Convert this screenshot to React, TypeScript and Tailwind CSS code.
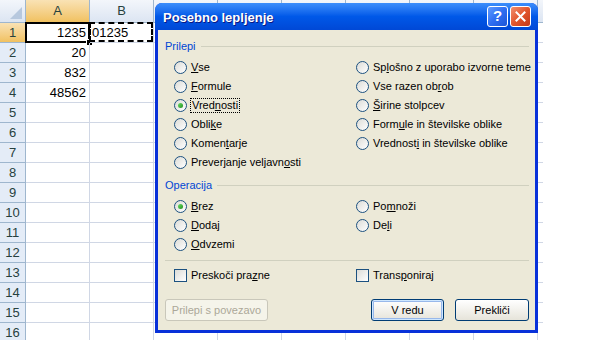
import React from 'react';

const COLS = ['A', 'B', 'C', 'D', 'E', 'F', 'G', 'H'];
const ROWS = Array.from({ length: 16 }, (_, i) => i + 1);

const VALUES: Record<string, string> = {
  A1: '1235',
  A2: '20',
  A3: '832',
  A4: '48562',
};

type Opt = { text: string; u: number; checked?: boolean; focus?: boolean };

const PASTE_LEFT: Opt[] = [
  { text: 'Vse', u: 0 },
  { text: 'Formule', u: 0 },
  { text: 'Vrednosti', u: 4, checked: true, focus: true },
  { text: 'Oblike', u: 4 },
  { text: 'Komentarje', u: 5 },
  { text: 'Preverjanje veljavnosti', u: 19 },
];

const PASTE_RIGHT: Opt[] = [
  { text: 'Splošno z uporabo izvorne teme', u: 2 },
  { text: 'Vse razen obrob', u: 12 },
  { text: 'Širine stolpcev', u: 0 },
  { text: 'Formule in številske oblike', u: 4 },
  { text: 'Vrednosti in številske oblike', u: 8 },
];

const OP_LEFT: Opt[] = [
  { text: 'Brez', u: 0, checked: true },
  { text: 'Dodaj', u: 0 },
  { text: 'Odvzemi', u: 0 },
];

const OP_RIGHT: Opt[] = [
  { text: 'Pomnoži', u: 2 },
  { text: 'Deli', u: 2 },
];

const Label = ({ text, u }: { text: string; u: number }) => (
  <>
    {text.slice(0, u)}
    <span className="underline underline-offset-[1px]">{text[u]}</span>
    {text.slice(u + 1)}
  </>
);

const Radio = ({ opt }: { opt: Opt }) => (
  <div className="flex h-[19px] items-center whitespace-nowrap">
    <span className="flex h-[13px] w-[13px] shrink-0 items-center justify-center rounded-full border border-[#1C5180] bg-linear-to-br from-[#DCDCD7] to-white">
      {opt.checked && <span className="h-[5px] w-[5px] rounded-full bg-linear-to-br from-[#6BE068] to-[#1E8E1B]" />}
    </span>
    <span
      className={
        opt.focus
          ? 'ml-[3px] border border-dotted border-black px-px leading-[13px]'
          : 'ml-[4px] leading-[13px]'
      }
    >
      <Label text={opt.text} u={opt.u} />
    </span>
  </div>
);

const Check = ({ text, u }: { text: string; u: number }) => (
  <div className="flex h-[19px] items-center whitespace-nowrap">
    <span className="h-[13px] w-[13px] shrink-0 border border-[#1C5180] bg-linear-to-br from-[#DCDCD7] to-white" />
    <span className="ml-[4px] leading-[13px]">
      <Label text={text} u={u} />
    </span>
  </div>
);

const GroupTitle = ({ title }: { title: string }) => (
  <div className="flex h-[13px] items-center">
    <span className="leading-[13px] text-[#0046D5]">{title}</span>
    <span className="ml-[5px] h-px flex-1 bg-[#D0D0BF]" />
  </div>
);

const Sheet = () => (
  <div className="grid w-[543px] grid-cols-[26px_repeat(8,64px)_5px] grid-rows-[23px_repeat(16,20px)] font-['Liberation_Sans',Arial,sans-serif] text-[13px]">
    <div className="relative border-r border-b border-[#9EB6CE] bg-linear-to-b from-[#F3F6FB] to-[#DCE5F2]">
      <svg className="absolute right-[3px] bottom-[3px]" width="12" height="12" viewBox="0 0 12 12">
        <path d="M12 0 L12 12 L0 12 Z" fill="#B7C8DE" />
      </svg>
    </div>
    {COLS.map((c) => (
      <div
        key={c}
        className={
          c === 'A'
            ? 'flex items-center justify-center border-r border-b border-[#9EB6CE] bg-linear-to-b from-[#F9E2B4] to-[#F1C15F] text-[#27413E]'
            : 'flex items-center justify-center border-r border-b border-[#9EB6CE] bg-linear-to-b from-[#F3F6FB] to-[#DCE5F2] text-[#27413E]'
        }
      >
        {c === 'A' || c === 'B' ? c : ''}
      </div>
    ))}
    <div className="border-b border-[#9EB6CE] bg-linear-to-b from-[#F3F6FB] to-[#DCE5F2]" />
    {ROWS.map((r) => (
      <React.Fragment key={r}>
        <div
          className={
            r === 1
              ? 'flex items-center justify-center border-r border-b border-[#9EB6CE] bg-linear-to-b from-[#F9E2B4] to-[#F1C15F] text-[#27413E]'
              : 'flex items-center justify-center border-r border-b border-[#9EB6CE] bg-[#E4ECF7] text-[#27413E]'
          }
        >
          {r}
        </div>
        {COLS.map((c) => {
          const key = `${c}${r}`;
          return (
            <div key={key} className="relative flex items-center justify-end border-r border-b border-[#D0D7E5] pr-[3px] text-black">
              {VALUES[key]}
              {key === 'A1' && (
                <>
                  <span className="absolute -top-px -left-px -right-px -bottom-px border-2 border-black" />
                  <span className="absolute -right-[4px] -bottom-[4px] h-[7px] w-[7px] border border-white bg-black" />
                </>
              )}
              {key === 'B1' && (
                <>
                  <span className="absolute left-[2px] text-black">01235</span>
                  <span className="absolute -top-px -left-px right-0 bottom-0 border-2 border-dashed border-black" />
                </>
              )}
            </div>
          );
        })}
        <div className="border-b border-[#D0D7E5]" />
      </React.Fragment>
    ))}
  </div>
);

const Dialog = () => (
  <div className="absolute top-[3px] left-[155px] flex h-[330px] w-[383px] flex-col overflow-hidden rounded-t-[7px] bg-[#0831D9] font-['Liberation_Sans',Tahoma,sans-serif] text-[11px] text-black">
    <div className="flex h-[27px] shrink-0 items-center bg-linear-to-b from-[#3C8EFB] via-[#0058E8] to-[#0048D6] pr-[7px] pl-[8px]">
      <span className="mt-[2px] text-[13px] font-bold text-white [text-shadow:1px_1px_#0A1883]">Posebno lepljenje</span>
      <div className="ml-auto flex gap-[2px]">
        <div className="flex h-[21px] w-[21px] items-center justify-center rounded-[3px] border border-white bg-linear-to-br from-[#5E9BFF] via-[#2F6EF2] to-[#1C55D6] text-[15px] font-bold text-white">
          ?
        </div>
        <div className="flex h-[21px] w-[21px] items-center justify-center rounded-[3px] border border-white bg-linear-to-br from-[#F08E6E] via-[#E2552B] to-[#C4391A]">
          <svg width="11" height="11" viewBox="0 0 11 11">
            <path d="M1.5 1.5 L9.5 9.5 M9.5 1.5 L1.5 9.5" stroke="white" strokeWidth="2" strokeLinecap="square" />
          </svg>
        </div>
      </div>
    </div>
    <div className="mx-[3px] mb-[3px] flex flex-1 flex-col bg-[#ECE9D8] pt-[10px] pr-[6px] pl-[7px]">
      <GroupTitle title="Prilepi" />
      <div className="mt-[5px] grid grid-cols-[182px_1fr] pl-[9px]">
        <div>
          {PASTE_LEFT.map((o) => (
            <Radio key={o.text} opt={o} />
          ))}
        </div>
        <div>
          {PASTE_RIGHT.map((o) => (
            <Radio key={o.text} opt={o} />
          ))}
        </div>
      </div>
      <div className="mt-[7px]">
        <GroupTitle title="Operacija" />
      </div>
      <div className="mt-[5px] grid grid-cols-[182px_1fr] pl-[9px]">
        <div>
          {OP_LEFT.map((o) => (
            <Radio key={o.text} opt={o} />
          ))}
        </div>
        <div>
          {OP_RIGHT.map((o) => (
            <Radio key={o.text} opt={o} />
          ))}
        </div>
      </div>
      <div className="mt-[6px] h-px bg-[#D0D0BF]" />
      <div className="mt-[5px] grid grid-cols-[182px_1fr] pl-[9px]">
        <Check text="Preskoči prazne" u={12} />
        <Check text="Transponiraj" u={5} />
      </div>
      <div className="mt-[14px] flex">
        <button className="h-[22px] w-[103px] rounded-[3px] border border-[#C9C7BA] bg-[#F5F4EA] text-[#ACA899]">
          Prilepi s povezavo
        </button>
        <button className="ml-auto h-[22px] w-[73px] rounded-[3px] border border-[#003C74] bg-linear-to-b from-white to-[#E6E4DA] shadow-[inset_0_0_0_1px_#CEE7FF,inset_0_0_0_2px_#98B8EA]">
          V redu
        </button>
        <button className="ml-[11px] h-[22px] w-[74px] rounded-[3px] border border-[#003C74] bg-linear-to-b from-white to-[#E6E4DA]">
          Prekliči
        </button>
      </div>
    </div>
  </div>
);

export default function App() {
  return (
    <div className="relative h-[340px] w-[601px] overflow-hidden bg-white">
      <Sheet />
      <Dialog />
    </div>
  );
}
